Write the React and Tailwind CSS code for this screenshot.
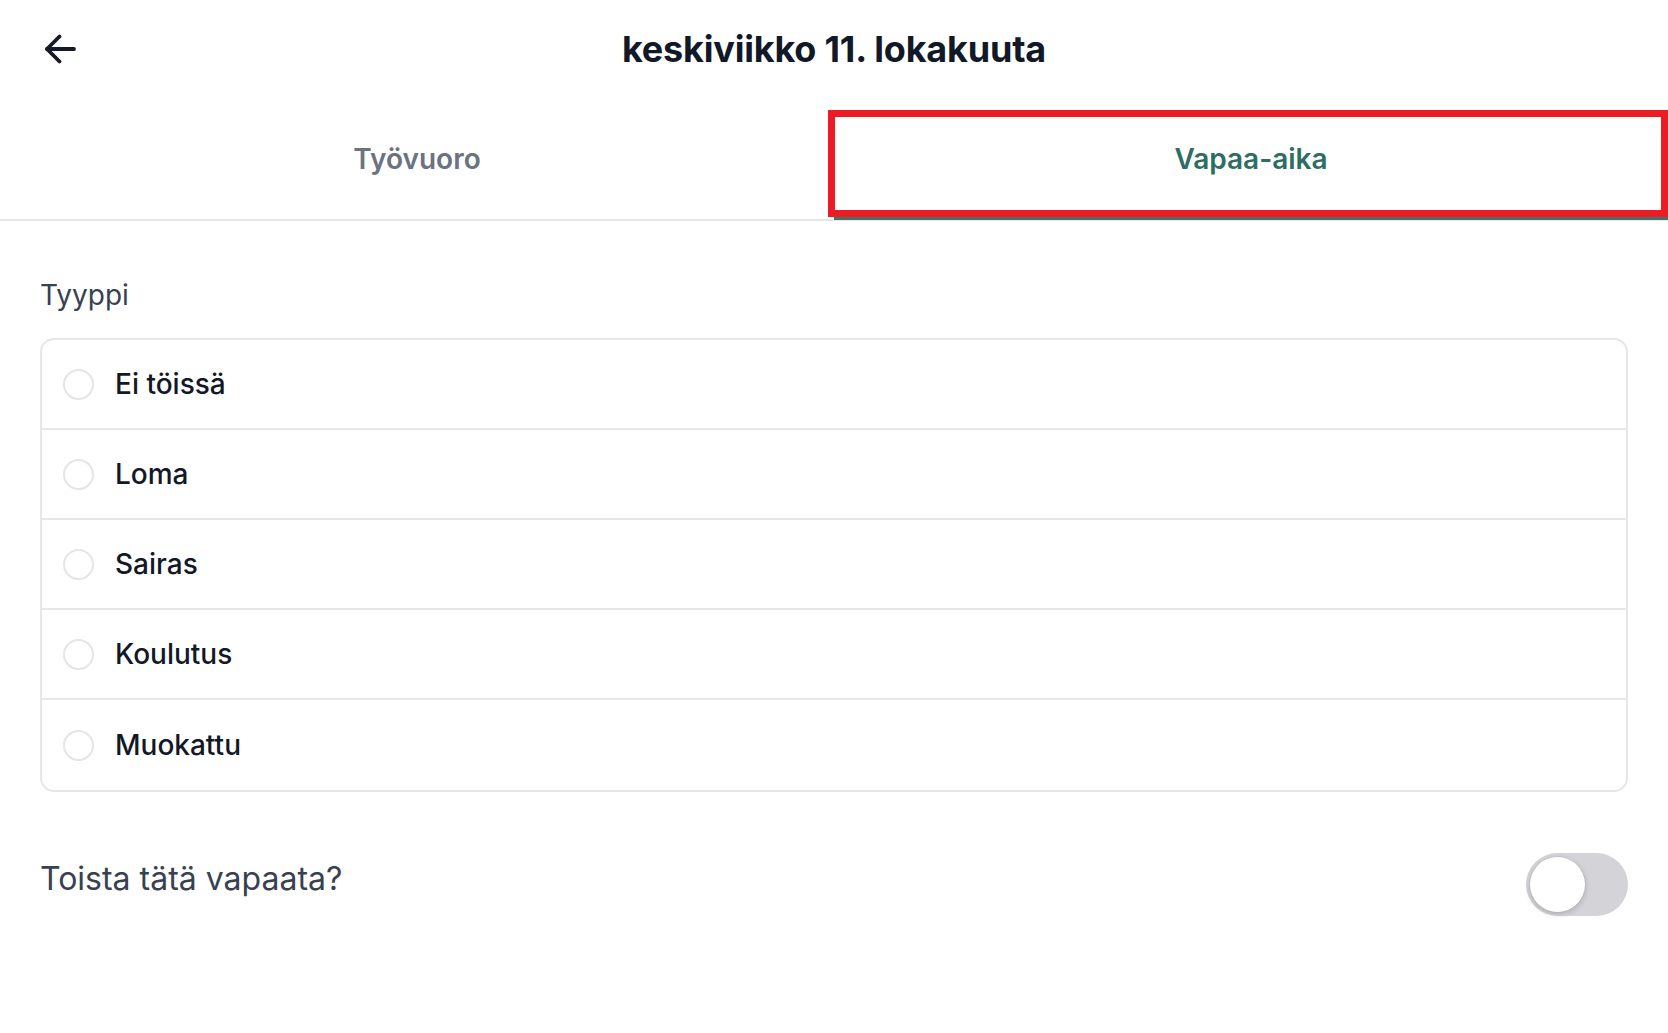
import React from "react";

function Radio() {
  return (
    <span className="block w-[31px] h-[31px] rounded-full border-[2.5px] border-[#e4e4e9] bg-white shrink-0" />
  );
}

const options = ["Ei töissä", "Loma", "Sairas", "Koulutus", "Muokattu"];

export default function App() {
  return (
    <div className="w-[1668px] h-[1033px] bg-white overflow-hidden font-['Inter',sans-serif]">
      {/* Header */}
      <div className="h-[98px] grid grid-cols-[1fr_auto_1fr] items-center">
        <div className="pl-[44px] flex items-center">
          <svg width="32" height="30" viewBox="0 0 32 30" fill="none" stroke="#151a26" strokeWidth="3.8" strokeLinecap="round" strokeLinejoin="round">
            <path d="M30 15H3" />
            <path d="M15.5 2.5 3 15l12.5 12.5" />
          </svg>
        </div>
        <h1 className="text-[36px] leading-[42px] font-bold text-[#111827] tracking-[-0.2px]">
          keskiviikko 11. lokakuuta
        </h1>
        <div />
      </div>

      {/* Tabs */}
      <div className="flex h-[123px]">
        <button className="flex-1 flex items-center justify-center border-b-2 border-[#e5e7eb] text-[28px] font-semibold text-[#6b7280]">
          Työvuoro
        </button>
        <button className="relative flex-1 flex items-center justify-center border-b-2 border-[#e5e7eb] text-[28px] font-semibold text-[#2e6d64]">
          Vapaa-aika
          <span className="absolute left-0 right-0 bottom-[-1px] h-[3px] bg-[#44706a]" />
          <span className="absolute -left-[6px] top-[12px] right-0 bottom-[2px] border-[7px] border-[#ec1c24] pointer-events-none" />
        </button>
      </div>

      {/* Content */}
      <div className="px-[40px] pt-[56px]">
        <div className="text-[28px] leading-[36px] text-[#374151] mb-[25px]">Tyyppi</div>
        <div className="border-2 border-[#e6e7ea] rounded-[14px] divide-y-2 divide-[#e6e7ea]">
          {options.map((o) => (
            <div key={o} className="h-[90px] flex items-center pl-[21px] gap-[21px]">
              <Radio />
              <span className="text-[28px] font-medium text-[#111827]">{o}</span>
            </div>
          ))}
        </div>

        <div className="mt-[61px] flex items-start justify-between">
          <div className="pt-[6px] text-[32px] leading-[40px] text-[#374151]">Toista tätä vapaata?</div>
          <div className="w-[102px] h-[63px] rounded-full bg-[#d4d4d8] p-[4px] flex items-center">
            <span className="block w-[55px] h-[55px] rounded-full bg-white shadow-[0_2px_6px_rgba(0,0,0,0.18),0_0_0_1px_rgba(0,0,0,0.04)]" />
          </div>
        </div>
      </div>
    </div>
  );
}
